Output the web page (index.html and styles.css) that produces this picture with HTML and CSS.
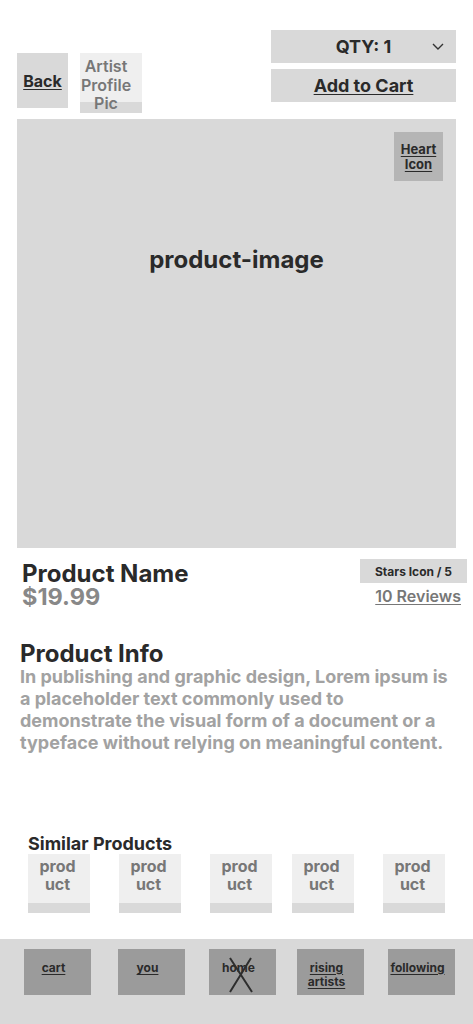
FILE: index.html
```html
<!DOCTYPE html>
<html lang="en">
<head>
<meta charset="utf-8">
<title>Product</title>
<link rel="stylesheet" href="styles.css">
</head>
<body>
<div class="page">
  <header class="header">
    <div class="header-left">
      <a class="back">Back</a>
      <div class="artist">Artist<br>Profile<br>Pic</div>
    </div>
    <div class="header-right">
      <div class="qty">
        <span class="qty-label">QTY: 1</span>
        <svg class="chev" width="12" height="7" viewBox="0 0 12 7"><path d="M1 1 L6 6 L11 1" fill="none" stroke="#333" stroke-width="1.4"/></svg>
      </div>
      <div class="add"><a>Add to Cart</a></div>
    </div>
  </header>

  <section class="hero">
    <span class="hero-label">product-image</span>
    <div class="heart"><a>Heart</a><a>Icon</a></div>
  </section>

  <section class="info-row">
    <div class="name-block">
      <div class="name">Product Name</div>
      <div class="price">$19.99</div>
    </div>
    <div class="rating">
      <div class="stars">Stars Icon / 5</div>
      <a class="reviews">10 Reviews</a>
    </div>
  </section>

  <section class="details">
    <h2 class="details-title">Product Info</h2>
    <p class="details-body">In publishing and graphic design, Lorem ipsum is a placeholder text commonly used to demonstrate the visual form of a document or a typeface without relying on meaningful content.</p>
  </section>

  <section class="similar">
    <h3 class="similar-title">Similar Products</h3>
    <div class="similar-list">
      <div class="prod">prod<br>uct</div>
      <div class="prod">prod<br>uct</div>
      <div class="prod">prod<br>uct</div>
      <div class="prod prod-tight">prod<br>uct</div>
      <div class="prod">prod<br>uct</div>
    </div>
  </section>

  <nav class="nav">
    <div class="nav-btn"><a>cart</a></div>
    <div class="nav-btn nav-wide"><a>you</a></div>
    <div class="nav-btn home">
      <span class="home-label">home</span>
      <svg class="cross" width="67" height="46" viewBox="0 0 67 46"><path d="M21 9 L43 43 M42 9 L21 43" stroke="#2e2e2e" stroke-width="2" fill="none"/></svg>
    </div>
    <div class="nav-btn nav-narrow"><a>rising<br>artists</a></div>
    <div class="nav-btn"><a>following</a></div>
  </nav>
</div>
</body>
</html>
```

FILE: styles.css
```css
html, body {
  margin: 0;
  padding: 0;
  background: #ffffff;
}
body {
  font-family: Inter, "Noto Sans", "Liberation Sans", sans-serif;
  font-weight: 600;
  color: #2a2a2a;
  width: 473px;
  height: 1024px;
  overflow: hidden;
}
a {
  text-decoration: underline;
  text-underline-offset: 2px;
  color: inherit;
}
.page {
  display: flex;
  flex-direction: column;
  height: 1024px;
}

/* header */
.header {
  display: flex;
  justify-content: space-between;
  align-items: flex-start;
  padding: 30px 17px 0 17px;
}
.header-left {
  display: flex;
  gap: 12px;
  margin-top: 23px;
  align-items: flex-start;
}
.back {
  width: 51px;
  height: 55px;
  background: #d9d9d9;
  display: flex;
  align-items: center;
  justify-content: center;
  font-size: 16px;
  font-weight: 700;
  color: #2a2a2a;
}
.artist {
  width: 62px;
  height: 60px;
  box-sizing: border-box;
  padding: 4px 10px 0 0;
  background: linear-gradient(to bottom, #efefef 0, #efefef 49px, #d9d9d9 49px);
  text-align: center;
  font-size: 16px;
  line-height: 18.5px;
  color: #777777;
  white-space: nowrap;
}
.header-right {
  width: 185px;
  display: flex;
  flex-direction: column;
  gap: 6px;
}
.qty {
  height: 33px;
  background: #d9d9d9;
  display: grid;
  grid-template-columns: 1fr auto 1fr;
  align-items: center;
  font-size: 18px;
  font-weight: 700;
}
.qty-label {
  grid-column: 2;
}
.chev {
  grid-column: 3;
  justify-self: end;
  margin-right: 12px;
}
.add {
  height: 33px;
  background: #d9d9d9;
  display: flex;
  align-items: center;
  justify-content: center;
  font-size: 18px;
  font-weight: 700;
}

/* hero */
.hero {
  position: relative;
  margin: 6px 17px 0 17px;
  height: 429px;
  background: #d9d9d9;
  display: flex;
  justify-content: center;
  align-items: flex-start;
  box-sizing: border-box;
  padding-top: 126px;
}
.hero-label {
  font-size: 24px;
  line-height: 29px;
  font-weight: 700;
}
.heart {
  position: absolute;
  top: 13px;
  right: 13px;
  width: 49px;
  height: 49px;
  background: #b5b5b5;
  display: flex;
  flex-direction: column;
  align-items: center;
  justify-content: center;
  font-size: 13px;
  line-height: 15px;
  font-weight: 700;
}

/* info row */
.info-row {
  display: flex;
  justify-content: space-between;
  align-items: flex-start;
  margin-top: 11px;
  padding: 0 6px 0 22px;
}
.name-block {
  margin-top: 2px;
}
.name {
  font-size: 24px;
  line-height: 26px;
  font-weight: 700;
}
.price {
  font-size: 23.5px;
  line-height: 20px;
  font-weight: 700;
  color: #888888;
}
.rating {
  display: flex;
  flex-direction: column;
  align-items: flex-end;
}
.stars {
  width: 107px;
  height: 24px;
  background: #d9d9d9;
  display: flex;
  align-items: center;
  justify-content: center;
  font-size: 12px;
  font-weight: 700;
}
.reviews {
  margin-top: 3px;
  margin-right: 6px;
  font-size: 16px;
  line-height: 20px;
  color: #777777;
}

/* details */
.details {
  margin-top: 35px;
  padding: 0 20px;
}
.details-title {
  margin: 0;
  font-size: 24px;
  line-height: 24px;
  font-weight: 700;
}
.details-body {
  margin: 0;
  font-size: 18px;
  line-height: 22px;
  font-weight: 700;
  color: #a2a2a2;
}

/* similar */
.similar {
  margin-top: 80px;
  padding-left: 28px;
}
.similar-title {
  margin: 0;
  font-size: 18px;
  line-height: 20px;
  font-weight: 700;
}
.similar-list {
  display: flex;
  gap: 29px;
}
.prod {
  width: 62px;
  height: 59px;
  box-sizing: border-box;
  padding: 3px 3px 0 0;
  background: linear-gradient(to bottom, #efefef 0, #efefef 49px, #d9d9d9 49px);
  text-align: center;
  font-size: 16px;
  line-height: 18px;
  font-weight: 700;
  color: #777777;
}
.prod-tight {
  margin-left: -9px;
}

/* nav */
.nav {
  margin-top: auto;
  height: 85px;
  box-sizing: border-box;
  background: #d9d9d9;
  display: flex;
  align-items: flex-start;
  gap: 24px;
  padding: 10px 0 0 24px;
}
.nav-btn {
  position: relative;
  width: 67px;
  height: 46px;
  box-sizing: border-box;
  padding: 12px 8px 0 0;
  background: #9b9b9b;
  text-align: center;
  font-size: 12px;
  line-height: 14px;
  font-weight: 700;
  color: #2a2a2a;
}
.nav-wide {
  margin-left: 3px;
}
.nav-narrow {
  margin-left: -3px;
}
.home-label {
  display: block;
}
.cross {
  position: absolute;
  left: 0;
  top: 0;
}
```
